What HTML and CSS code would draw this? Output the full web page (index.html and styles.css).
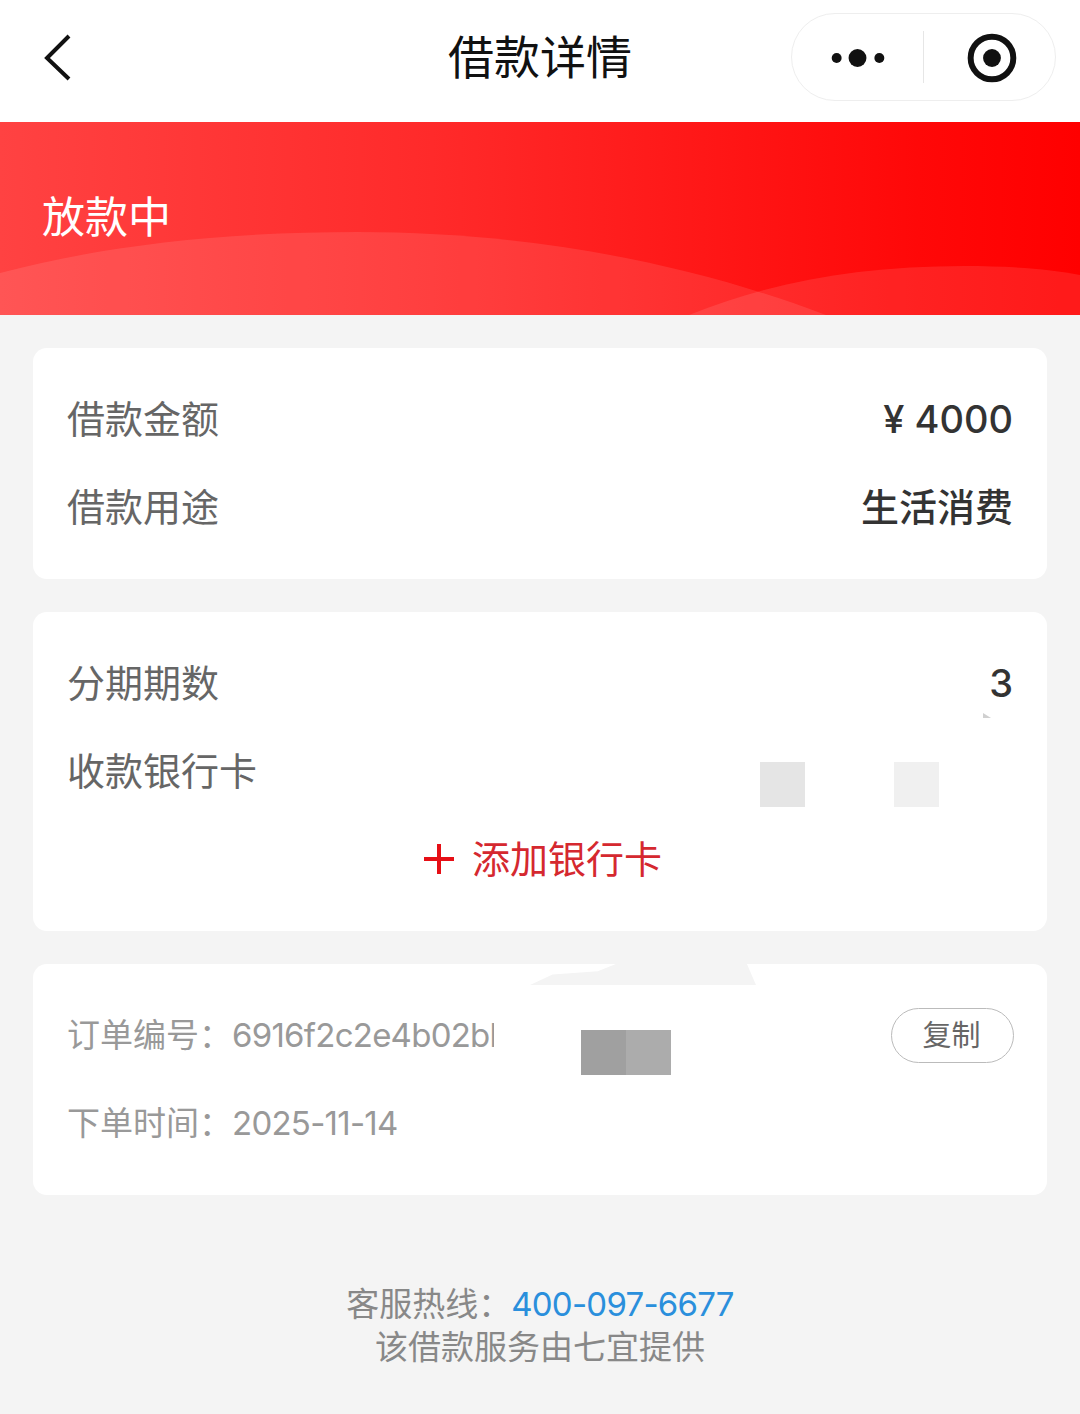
FILE: index.html
```html
<!DOCTYPE html>
<html lang="zh-CN">
  <head>
    <meta charset="UTF-8" />
    <meta name="viewport" content="width=device-width, initial-scale=1.0" />
    <title>借款详情</title>
    <link rel="stylesheet" href="styles.css">
  </head>

  <body>
    <header class="nav-bar">
      <div class="nav-left">
        <svg class="back-icon" width="30" height="50" viewBox="0 0 30 50">
          <path d="M25 3 L3 25 L25 46" />
        </svg>
      </div>
      <h1 class="nav-title">借款详情</h1>
      <div class="nav-right">
        <div class="capsule">
          <svg class="capsule-icon" width="132" height="86" viewBox="0 0 132 86">
            <circle cx="45" cy="44" r="5" />
            <circle cx="66" cy="44" r="9" />
            <circle cx="88" cy="44" r="5" />
          </svg>
          <div class="capsule-line"></div>
          <svg class="capsule-icon" width="132" height="86" viewBox="0 0 132 86">
            <circle class="ring" cx="68.5" cy="44" r="21.5" />
            <circle cx="68.5" cy="44" r="9" />
          </svg>
        </div>
      </div>
    </header>

    <section class="status-banner">
      <svg class="banner-waves" width="1080" height="193" viewBox="0 0 1080 193">
        <path d="M0 151 C110 122 230 110 358 110 C540 110 700 145 826 193 L0 193 Z" />
        <path d="M689 193 C770 160 860 144 964 144 C1010 144 1050 147 1080 153 L1080 193 Z" />
      </svg>
      <p class="status-text">放款中</p>
    </section>

    <main class="content">
      <div class="card">
        <div class="row">
          <span class="row-label">借款金额</span>
          <span class="row-value row-number">¥ 4000</span>
        </div>
        <div class="row">
          <span class="row-label">借款用途</span>
          <span class="row-value">生活消费</span>
        </div>
      </div>

      <div class="card bank-card">
        <div class="row">
          <span class="row-label">分期期数</span>
          <span class="row-value row-number">3</span>
        </div>
        <div class="row">
          <span class="row-label">收款银行卡</span>
        </div>
        <div class="row add-card">
          <svg class="plus-icon" width="30" height="30" viewBox="0 0 30 30">
            <path d="M0 15 H30 M15 0 V30" />
          </svg>
          <span class="row-label add-text">添加银行卡</span>
        </div>
        <div class="mosaic mosaic-one"></div>
        <div class="mosaic mosaic-two"></div>
        <div class="speck"></div>
      </div>

      <div class="card order-card">
        <div class="smudge"></div>
        <div class="row">
          <span class="order-text order-no">订单编号：<span class="digits">6916f2c2e4b02bbf</span></span>
          <button class="copy-button">复制</button>
        </div>
        <div class="row">
          <span class="order-text">下单时间：<span class="digits">2025-11-14</span></span>
        </div>
        <div class="mosaic mosaic-dark"></div>
        <div class="mosaic mosaic-mid"></div>
      </div>
    </main>

    <footer class="footer">
      <p>客服热线：<span class="phone digits">400-097-6677</span></p>
      <p>该借款服务由七宜提供</p>
    </footer>
  </body>
</html>
```

FILE: styles.css
```css
* {
  box-sizing: border-box;
}

body {
  margin: 0;
  background-color: #f4f4f4;
  font-family: Inter, "Noto Sans CJK SC", sans-serif;
}

p {
  margin: 0;
}

.nav-bar {
  display: grid;
  grid-template-columns: 1fr auto 1fr;
  align-items: center;
  height: 122px;
  background-color: white;
}

.nav-left {
  display: flex;
  padding-left: 44px;
  padding-bottom: 6px;
}

.back-icon path {
  fill: none;
  stroke: #111;
  stroke-width: 4;
}

.nav-title {
  margin: 0;
  font-size: 46px;
  font-weight: 400;
  color: #111;
  line-height: 60px;
  margin-top: -8px;
}

.nav-right {
  display: flex;
  justify-content: flex-end;
  padding-right: 24px;
  padding-bottom: 8px;
}

.capsule {
  display: flex;
  align-items: center;
  width: 265px;
  height: 88px;
  background-color: white;
  border: 1px solid #eeeeee;
  border-radius: 44px;
}

.capsule-icon {
  fill: #111;
}

.capsule-icon .ring {
  fill: none;
  stroke: #111;
  stroke-width: 6;
}

.capsule-line {
  width: 1px;
  height: 52px;
  background-color: #e6e6e6;
}

.status-banner {
  position: relative;
  height: 193px;
  padding: 66px 0 0 42px;
  background: linear-gradient(90deg, #ff4242 0%, #ff2a2a 40%, #ff0808 85%, #ff0000 100%);
  overflow: hidden;
}

.banner-waves {
  position: absolute;
  left: 0;
  top: 0;
  fill: rgba(255, 255, 255, 0.1);
}

.status-text {
  position: relative;
  font-size: 43px;
  line-height: 58px;
  color: white;
}

.content {
  display: flex;
  flex-direction: column;
  gap: 33px;
  padding: 33px 33px 0;
}

.card {
  position: relative;
  padding: 27px 34px 28px;
  background-color: white;
  border-radius: 14px;
}

.row {
  display: flex;
  justify-content: space-between;
  align-items: center;
  height: 88px;
}

.row-label {
  padding-bottom: 6px;
  font-size: 38px;
  color: #666666;
}

.row-value {
  padding-bottom: 6px;
  font-size: 38px;
  font-weight: 500;
  color: #333333;
}

.row-number {
  padding-bottom: 0;
}

.add-card {
  justify-content: center;
  gap: 18px;
  padding-left: 6px;
}

.add-text {
  color: #d5282f;
}

.plus-icon path {
  fill: none;
  stroke: #e60f16;
  stroke-width: 4;
}

.order-text {
  padding-bottom: 4px;
  font-size: 33px;
  color: #999999;
}

.order-no {
  width: 427px;
  overflow: hidden;
  white-space: nowrap;
}

.digits {
  letter-spacing: -0.75px;
}

.copy-button {
  width: 123px;
  height: 55px;
  padding: 0 2px 4px 0;
  margin-right: -1px;
  background-color: white;
  border: 1px solid #bbbbbb;
  border-radius: 28px;
  font-family: inherit;
  font-size: 29px;
  color: #666666;
}

/* blurred leftovers of the masked screenshot */
.mosaic {
  position: absolute;
  width: 45px;
  height: 45px;
}

.mosaic-one {
  left: 727px;
  top: 150px;
  background-color: #e5e5e5;
}

.mosaic-two {
  left: 861px;
  top: 150px;
  background-color: #f0f0f0;
}

.mosaic-dark {
  left: 548px;
  top: 66px;
  background-color: #a0a0a0;
}

.mosaic-mid {
  left: 593px;
  top: 66px;
  background-color: #acacac;
}

.speck {
  position: absolute;
  left: 950px;
  top: 101px;
  width: 8px;
  height: 5px;
  background-color: #d0d0d0;
  clip-path: polygon(0 0, 100% 100%, 0 100%);
}

.smudge {
  position: absolute;
  left: 497px;
  top: 0;
  width: 226px;
  height: 21px;
  background-color: #f4f4f4;
  clip-path: polygon(0 100%, 10% 50%, 30% 35%, 38% 0, 96% 0, 100% 100%);
}

.footer {
  padding-top: 88px;
  text-align: center;
  font-size: 33px;
  line-height: 43px;
  color: #888888;
}

.phone {
  color: #2a8fdc;
}
```
